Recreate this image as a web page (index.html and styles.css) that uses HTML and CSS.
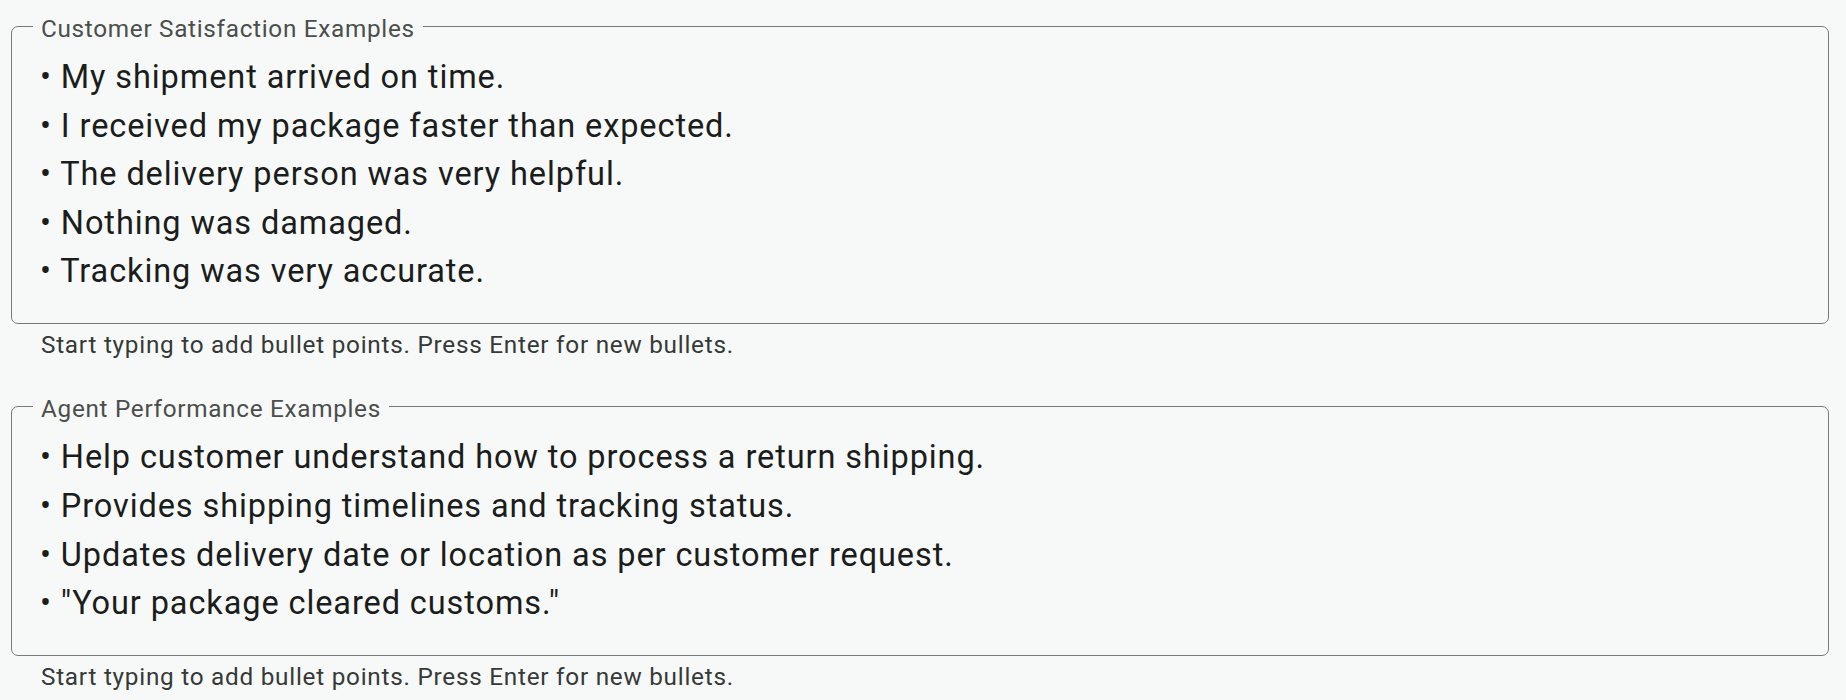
FILE: index.html
```html
<!DOCTYPE html>
<html lang="en">
<head>
<meta charset="utf-8">
<title>Examples</title>
<link rel="stylesheet" href="styles.css">
</head>
<body>
<div class="page">
  <div class="field">
    <fieldset class="box">
      <legend class="label">Customer Satisfaction Examples</legend>
      <div class="content">
        <div class="line">• My shipment arrived on time.</div>
        <div class="line">• I received my package faster than expected.</div>
        <div class="line">• The delivery person was very helpful.</div>
        <div class="line">• Nothing was damaged.</div>
        <div class="line">• Tracking was very accurate.</div>
      </div>
    </fieldset>
    <div class="helper">Start typing to add bullet points. Press Enter for new bullets.</div>
  </div>
  <div class="field">
    <fieldset class="box">
      <legend class="label">Agent Performance Examples</legend>
      <div class="content">
        <div class="line">• Help customer understand how to process a return shipping.</div>
        <div class="line">• Provides shipping timelines and tracking status.</div>
        <div class="line">• Updates delivery date or location as per customer request.</div>
        <div class="line">• "Your package cleared customs."</div>
      </div>
    </fieldset>
    <div class="helper">Start typing to add bullet points. Press Enter for new bullets.</div>
  </div>
</div>
</body>
</html>
```
FILE: styles.css
```css
html, body {
  margin: 0;
  background: #f7f9f8;
  font-family: Roboto, "Noto Sans", sans-serif;
}

.page {
  padding: 9px 17px 0 11px;
  display: flex;
  flex-direction: column;
  gap: 27px;
}

.field {
  display: flex;
  flex-direction: column;
}

.box {
  margin: 0;
  min-width: 0;
  border: 1px solid #777a79;
  border-radius: 7px;
  padding: 10px 28px 27px 28px;
}

.label {
  margin-left: -7px;
  padding: 6px 8px 0 8px;
  font-size: 24.3px;
  line-height: 28px;
  letter-spacing: 0.7px;
  color: #4a4e4c;
}

.content {
  display: flex;
  flex-direction: column;
}

.line {
  font-size: 32.5px;
  line-height: 48.6px;
  letter-spacing: 0.9px;
  color: #1b1d1c;
  white-space: pre;
}

.helper {
  margin-top: 4.5px;
  padding-left: 30px;
  font-size: 24.3px;
  line-height: 34px;
  letter-spacing: 0.75px;
  color: #353937;
}
```
